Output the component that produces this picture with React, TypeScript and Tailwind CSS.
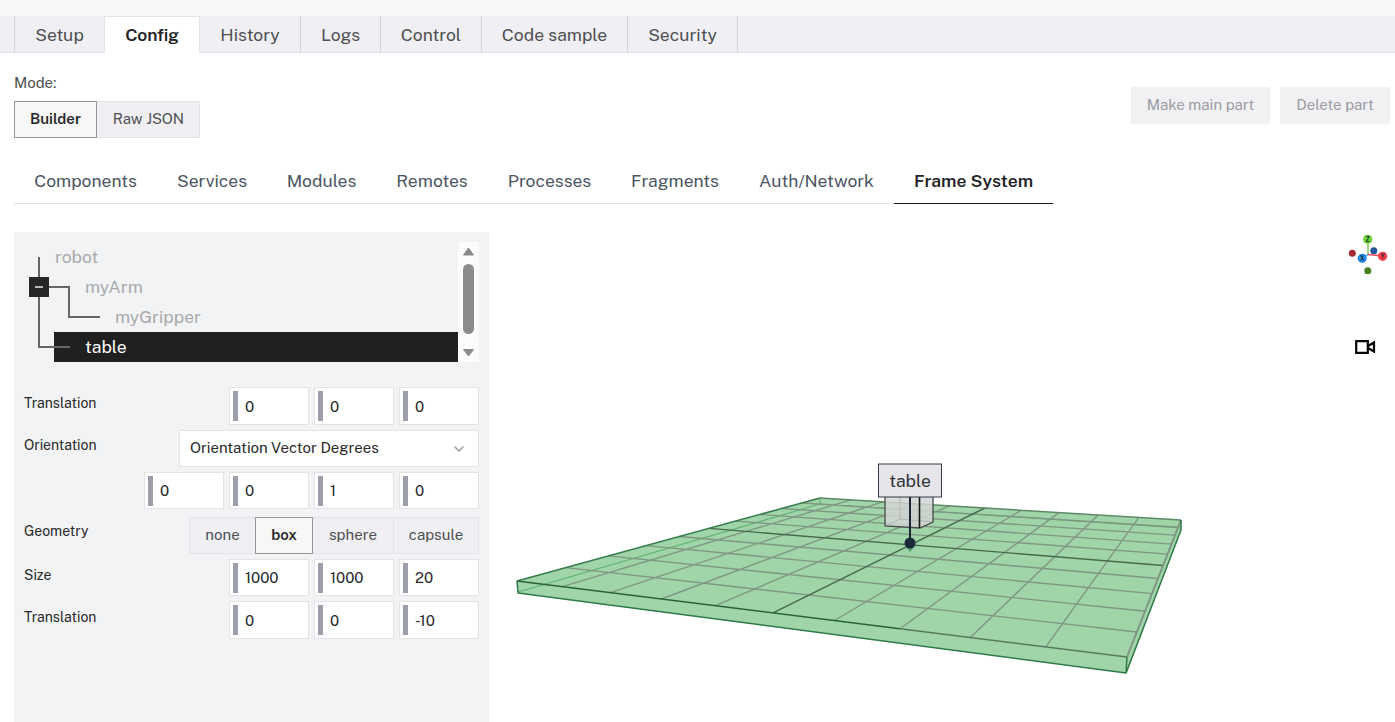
import React from 'react';
import { ChevronDown } from 'lucide-react';

const tabs = [
  { label: 'Setup', cls: 'h-9 pt-[2px] w-[90px] border-l border-[#d3d3d8]' },
  { label: 'Config', cls: 'h-[37px] pt-px pb-px w-[96px] border-x border-t border-[#e4e4e8] bg-white font-semibold text-[#222326] tracking-[-0.2px]' },
  { label: 'History', cls: 'h-9 pt-[2px] w-[100px]' },
  { label: 'Logs', cls: 'h-9 pt-[2px] w-[80px] border-l border-[#d3d3d8]' },
  { label: 'Control', cls: 'h-9 pt-[2px] w-[101px] border-l border-[#d3d3d8]' },
  { label: 'Code sample', cls: 'h-9 pt-[2px] w-[146px] border-l border-[#d3d3d8]' },
  { label: 'Security', cls: 'h-9 pt-[2px] w-[111px] border-x border-[#d3d3d8]' },
];

const sections = [
  { label: 'Components', cls: 'w-[143px]' },
  { label: 'Services', cls: 'w-[110px]' },
  { label: 'Modules', cls: 'w-[109px]' },
  { label: 'Remotes', cls: 'w-[112px]' },
  { label: 'Processes', cls: 'w-[123px]' },
  { label: 'Fragments', cls: 'w-[128px]' },
  { label: 'Auth/Network', cls: 'w-[155px]' },
];

function NumberField({ value }: { value: string }) {
  return (
    <div className="flex h-full w-20 items-center border border-[#e4e4e6] bg-white pl-[3px] text-[15px] text-[#282829]">
      <span className="h-[30px] w-[5px] bg-[#9c9ea9]" />
      <span className="pl-[7px] pt-[2px]">{value}</span>
    </div>
  );
}

function FieldRow({ label, values, cls }: { label: string; values: string[]; cls: string }) {
  return (
    <div className={'flex justify-between ' + cls}>
      <span className="pt-[6px] text-[14px] leading-5 text-[#282829]">{label}</span>
      <div className="flex gap-[5px]">
        {values.map((v, i) => (
          <NumberField key={i} value={v} />
        ))}
      </div>
    </div>
  );
}

function FrameTree() {
  return (
    <div className="relative flex h-[120px] w-[455px] text-[17.5px] leading-[30px] text-[#aaaaab]">
      <div className="w-[434px]">
        <div className="pl-[31px]">robot</div>
        <div className="pl-[61px]">myArm</div>
        <div className="pl-[91px]">myGripper</div>
        <div className="ml-[30px] bg-[#202020] pl-[31px] text-white">table</div>
      </div>
      <svg className="shrink-0" width="21" height="120" viewBox="0 0 21 120">
        <rect width="21" height="120" fill="#fcfcfc" />
        <path d="M10.5 6 15.5 13H5.5Z" fill="#8b8b8b" stroke="#8b8b8b" strokeLinejoin="round" />
        <rect x="5" y="22" width="11" height="70" rx="5.5" fill="#8b8b8b" />
        <path d="M5.5 107.500H15.500L10.500 114Z" fill="#8b8b8b" stroke="#8b8b8b" strokeLinejoin="round" />
      </svg>
      <svg className="absolute left-0 top-0" width="90" height="120" viewBox="0 0 90 120">
        <path d="M15 15V106M14 105H46M25 45H45V76M44 75H76" fill="none" stroke="#666" strokeWidth="2" />
        <rect x="5" y="35" width="20" height="20" fill="#262626" />
        <rect x="11" y="44" width="8" height="2" fill="#bbb" />
      </svg>
    </div>
  );
}

type Point = [number, number];
const topFace: Point[] = [[820, 498], [1181, 520], [1127, 657], [517, 581]];

/* Perspective mapping from the unit square to the top face of the table. */
function project(u: number, v: number): Point {
  const [[x0, y0], [x1, y1], [x2, y2], [x3, y3]] = topFace;
  const dx1 = x1 - x2, dx2 = x3 - x2, sx = x0 - x1 + x2 - x3;
  const dy1 = y1 - y2, dy2 = y3 - y2, sy = y0 - y1 + y2 - y3;
  const det = dx1 * dy2 - dx2 * dy1;
  const g = (sx * dy2 - dx2 * sy) / det;
  const h = (dx1 * sy - sx * dy1) / det;
  const w = g * u + h * v + 1;
  return [
    ((x1 - x0 + g * x1) * u + (x3 - x0 + h * x3) * v + x0) / w,
    ((y1 - y0 + g * y1) * u + (y3 - y0 + h * y3) * v + y0) / w,
  ];
}

function segment(a: Point, b: Point) {
  return `M${a[0].toFixed(1)} ${a[1].toFixed(1)}L${b[0].toFixed(1)} ${b[1].toFixed(1)}`;
}

function Scene() {
  const steps = [1, 2, 3, 4, 6, 7, 8, 9];
  const grid = steps
    .map((i) => segment(project(i / 10, 0), project(i / 10, 1)) + segment(project(0, i / 10), project(1, i / 10)))
    .join('');
  const axes = segment(project(0.5, 0), project(0.5, 1)) + segment(project(0, 0.5), project(1, 0.5));
  return (
    <svg className="block" width="906" height="490" viewBox="489 232 906 490">
      <path d="M820 498 1181 520 1181 530 1127 673 518 593 517 581Z" fill="#a0d4a9" />
      <path d="M518 592 820 504 1181 528" fill="none" stroke="#4ba866" strokeOpacity=".75" strokeWidth="1.1" />
      <path d="M820 498V504" stroke="#4ba866" />
      <path d={grid} fill="none" stroke="#809783" strokeWidth="1.4" />
      <path d={axes} fill="none" stroke="#456b4c" strokeWidth="1.4" />
      <path d="M517 581 820 498" fill="none" stroke="#367b4b" strokeWidth="1.5" />
      <path d="M820 498 1181 520" fill="none" stroke="#5c8a67" strokeWidth="1.5" />
      <path d="M1181 520 1127 657" stroke="#7f9681" strokeWidth="2" />
      <path d="M517 581 900 628.700" stroke="#28643b" strokeWidth="1.5" />
      <path d="M900 628.700 1127 657" stroke="#557c5e" strokeWidth="1.5" />
      <path d="M517 581 518 593 1126 673 1127 657M1126 673 1181 530V520" fill="none" stroke="#2f7a4a" strokeWidth="1.5" strokeLinejoin="round" />
      <path d="M885 490V526L920 528 933 522V490Z" fill="#d3d4d4" fillOpacity=".86" />
      <path d="M900 496V519L933 522M885 526 900 519" fill="none" stroke="#b2b5b3" />
      <path d="M885 496V526L920 528 933 522V496" fill="none" stroke="#454a47" strokeWidth="1.3" />
      <path d="M919.500 496V528" stroke="#161918" strokeWidth="1.6" />
      <path d="M905 546 910 552 915 546Z" fill="#53a875" />
      <path d="M910 496V543" stroke="#1c2533" strokeWidth="2" />
      <circle cx="910" cy="543" r="5.500" fill="#1c2938" />
      <rect x="878.500" y="464" width="63" height="33" fill="#e5e5ea" stroke="#353946" />
      <text x="910" y="487" textAnchor="middle" fontSize="17.500" fill="#303136">table</text>
      <path d="M1368 240V254.500" stroke="#70bd3b" strokeWidth="1.3" />
      <path d="M1368 254.500 1383 256" stroke="#f5455a" strokeWidth="1.3" />
      <path d="M1368 254.500 1362 258" stroke="#348fe5" strokeWidth="1.3" />
      <circle cx="1352.300" cy="253.300" r="3.500" fill="#a42a34" />
      <circle cx="1373.800" cy="250.800" r="3.500" fill="#20599c" />
      <circle cx="1367.800" cy="270.800" r="3.500" fill="#47801e" />
      <circle cx="1367.700" cy="239.300" r="4.600" fill="#70d335" />
      <circle cx="1382.600" cy="256.300" r="4.600" fill="#fa414e" />
      <circle cx="1362.200" cy="258.300" r="4.600" fill="#298eec" />
      <g fontSize="6.500" fontWeight="600" textAnchor="middle" fill="#142638">
        <text x="1367.700" y="241.700">Z</text>
        <text x="1382.600" y="258.700">Y</text>
        <text x="1362.200" y="260.700">X</text>
      </g>
      <path d="M1356.200 341.200H1367.800V352.800H1356.200ZM1368 346 1374 342.500V351.500L1368 348" fill="none" stroke="#050505" strokeWidth="2.2" />
    </svg>
  );
}

export default function App() {
  return (
    <div className="h-[722px] w-[1395px] overflow-hidden bg-white font-['Public_Sans','Inter',sans-serif] whitespace-nowrap">
      <div className="h-4 bg-[#f7f7f9]" />
      <nav className="flex h-[37px] border-b border-[#e4e4e6] bg-[#f0f0f4] pl-[14px] text-[17.5px] text-[#4e4f52]">
        {tabs.map((t) => (
          <div key={t.label} className={'flex items-center justify-center ' + t.cls}>
            {t.label}
          </div>
        ))}
      </nav>
      <header className="flex h-[105px] justify-between pl-[14px] pr-[5px]">
        <div className="pt-5">
          <div className="h-7 text-[15px] leading-5 text-[#4e4f52]">Mode:</div>
          <div className="flex h-[37px] text-[15px]">
            <div className="flex w-[83px] items-center justify-center border border-[#97979b] bg-[#f7f7f8] pb-px font-semibold text-[#282829]">Builder</div>
            <div className="flex w-[103px] items-center justify-center border border-l-0 border-[#e4e4e6] bg-[#f0f0f4] pb-px pl-px text-[#4e4f52]">Raw JSON</div>
          </div>
        </div>
        <div className="flex gap-[10px] pt-[34px] text-[15px] text-[#9c9ca4]">
          <div className="flex h-[37px] w-[139px] items-center justify-center bg-[#f1f1f4]">Make main part</div>
          <div className="flex h-[37px] w-[110px] items-center justify-center bg-[#f1f1f4]">Delete part</div>
        </div>
      </header>
      <nav className="ml-[14px] flex h-[46px] w-[1039px] text-[17.5px] text-[#4b5563]">
        {sections.map((s) => (
          <div key={s.label} className={'flex items-center justify-center border-b border-[#e4e4e6] pt-px ' + s.cls}>
            {s.label}
          </div>
        ))}
        <div className="flex w-[159px] items-center justify-center border-b border-[#17181b] pt-px font-semibold text-[#222326]">Frame System</div>
      </nav>
      <main className="flex pl-[14px] pt-7">
        <aside className="h-[490px] w-[475px] bg-[#f2f3f5] pl-[10px] pr-[10px] pt-[10px]">
          <FrameTree />
          <div className="w-[455px] pt-[25px]">
            <FieldRow label="Translation" values={['0', '0', '0']} cls="h-[38px]" />
            <div className="mt-[5px] flex h-[37px] justify-between">
              <span className="pt-[5px] text-[14px] leading-5 text-[#282829]">Orientation</span>
              <div className="flex w-[300px] items-center justify-between border border-[#e4e4e6] bg-white pl-[10px] pr-[11px] text-[15px] text-[#282829]">
                <span className="pb-px">Orientation Vector Degrees</span>
                <ChevronDown size={16} color="#9c9ca4" strokeWidth={2.3} />
              </div>
            </div>
            <FieldRow label="" values={['0', '0', '1', '0']} cls="mt-[5px] h-[37px]" />
            <div className="mt-2 flex h-[37px] justify-between">
              <span className="pt-1 text-[14px] leading-5 text-[#282829]">Geometry</span>
              <div className="flex text-[15px] text-[#4e4f52]">
                <div className="flex w-[66px] items-center justify-center border border-r-0 border-[#e4e4e6] bg-[#f0f0f4]">none</div>
                <div className="flex w-[58px] items-center justify-center border border-[#97979b] bg-[#f7f7f8] font-semibold text-[#282829]">box</div>
                <div className="flex w-[80px] items-center justify-center border-y border-[#e4e4e6] bg-[#f0f0f4]">sphere</div>
                <div className="flex w-[86px] items-center justify-center border border-[#e4e4e6] bg-[#f0f0f4]">capsule</div>
              </div>
            </div>
            <FieldRow label="Size" values={['1000', '1000', '20']} cls="mt-[5px] h-[37px]" />
            <FieldRow label="Translation" values={['0', '0', '-10']} cls="mt-[5px] h-[38px]" />
          </div>
        </aside>
        <Scene />
      </main>
    </div>
  );
}
